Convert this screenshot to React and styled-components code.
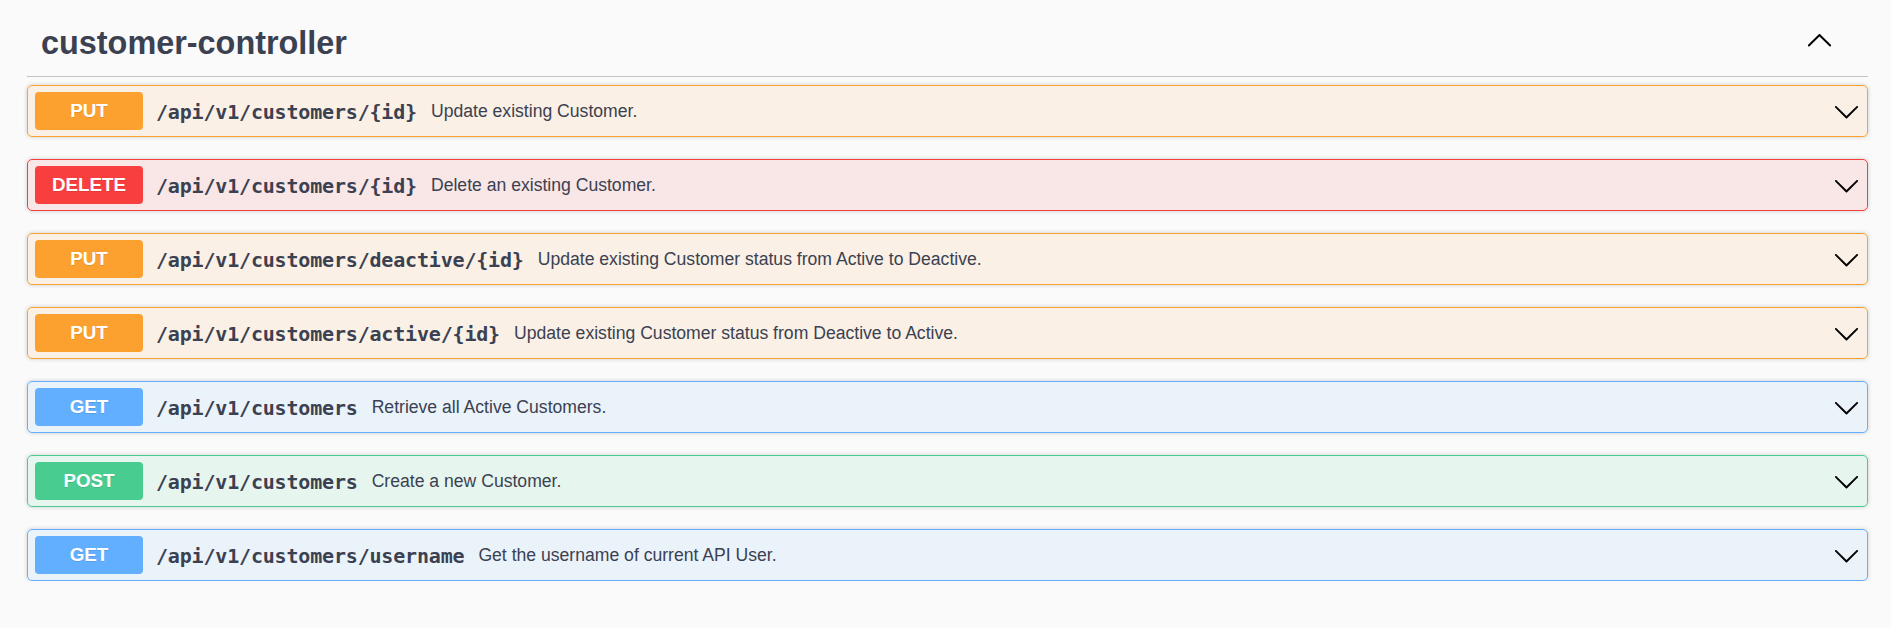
import React from "react";
import styled, { createGlobalStyle } from "styled-components";

const GlobalStyle = createGlobalStyle`
  html, body {
    margin: 0;
    padding: 0;
    background: #fafafa;
  }
  body {
    font-family: "Liberation Sans", Arial, sans-serif;
    color: #3b4151;
  }
`;

const METHOD_COLORS = {
  put: "#fca130",
  delete: "#f93e3e",
  get: "#61affe",
  post: "#49cc90",
};

const tint = (hex) => {
  const n = parseInt(hex.slice(1), 16);
  const r = (n >> 16) & 255;
  const g = (n >> 8) & 255;
  const b = n & 255;
  return `rgba(${r}, ${g}, ${b}, 0.1)`;
};

const Wrapper = styled.div`
  padding: 13px 23px 0 27px;
  width: 100%;
  box-sizing: border-box;
`;

const TagSection = styled.section`
  display: flex;
  flex-direction: column;
`;

const TagHeader = styled.h3`
  display: flex;
  align-items: center;
  box-sizing: border-box;
  height: 64px;
  margin: 0 0 8px;
  padding: 0 35px 2px 14px;
  border-bottom: 1px solid rgba(59, 65, 81, 0.3);
  font-family: "Liberation Sans", Arial, sans-serif;
  font-size: 32.4px;
  font-weight: 700;
  color: #3b4151;
`;

const TagName = styled.span`
  flex: 1 1 auto;
`;

const ToggleIcon = styled.svg`
  width: 27px;
  height: 27px;
  flex: none;
  margin-bottom: ${(p) => (p.up ? "8px" : "0")};
  fill: #000;
`;

const OpList = styled.div`
  display: flex;
  flex-direction: column;
  gap: 22px;
`;

const OpBlock = styled.div`
  border: 1px solid ${(p) => METHOD_COLORS[p.method]};
  background: ${(p) => tint(METHOD_COLORS[p.method])};
  border-radius: 5px;
  box-shadow: 0 0 4px rgba(0, 0, 0, 0.19);
`;

const Summary = styled.div`
  display: flex;
  align-items: center;
  padding: 6px 7px;
  cursor: pointer;
`;

const Method = styled.span`
  flex: none;
  width: 108px;
  height: 38px;
  display: flex;
  align-items: center;
  justify-content: center;
  border-radius: 4px;
  background: ${(p) => METHOD_COLORS[p.method]};
  color: #fff;
  font-family: "Liberation Sans", Arial, sans-serif;
  font-size: 18.8px;
  font-weight: 700;
  text-shadow: 0 1px 0 rgba(0, 0, 0, 0.1);
`;

const Path = styled.span`
  padding: 2px 14px 0 13px;
  font-family: "DejaVu Sans Mono", "Liberation Mono", monospace;
  font-size: 20px;
  letter-spacing: -0.18px;
  font-weight: 700;
  color: #3b4151;
  white-space: nowrap;
`;

const Description = styled.span`
  flex: 1 1 auto;
  font-family: "Liberation Sans", Arial, sans-serif;
  font-size: 17.6px;
  color: #3b4151;
`;

const ArrowDown = () => (
  <ToggleIcon viewBox="0 0 20 20">
    <path d="M17.418 6.109c.272-.268.709-.268.979 0s.271.701 0 .969l-7.908 7.83c-.27.268-.707.268-.979 0l-7.908-7.83c-.27-.268-.27-.701 0-.969.271-.268.709-.268.979 0L10 13.25l7.418-7.141z" />
  </ToggleIcon>
);

const ArrowUp = () => (
  <ToggleIcon up viewBox="0 0 20 20">
    <path d="M17.418 14.908c.272.268.709.268.979 0s.271-.701 0-.969l-7.908-7.83c-.27-.268-.707-.268-.979 0l-7.908 7.83c-.27.268-.27.701 0 .969.271.268.709.268.979 0L10 7.767l7.418 7.141z" />
  </ToggleIcon>
);

const operations = [
  { method: "put", path: "/api/v1/customers/{id}", summary: "Update existing Customer." },
  { method: "delete", path: "/api/v1/customers/{id}", summary: "Delete an existing Customer." },
  {
    method: "put",
    path: "/api/v1/customers/deactive/{id}",
    summary: "Update existing Customer status from Active to Deactive.",
  },
  {
    method: "put",
    path: "/api/v1/customers/active/{id}",
    summary: "Update existing Customer status from Deactive to Active.",
  },
  { method: "get", path: "/api/v1/customers", summary: "Retrieve all Active Customers." },
  { method: "post", path: "/api/v1/customers", summary: "Create a new Customer." },
  {
    method: "get",
    path: "/api/v1/customers/username",
    summary: "Get the username of current API User.",
  },
];

const App = () => {
  return (
    <>
      <GlobalStyle />
      <Wrapper>
        <TagSection>
          <TagHeader>
            <TagName>customer-controller</TagName>
            <ArrowUp />
          </TagHeader>
          <OpList>
            {operations.map((op, i) => (
              <OpBlock key={i} method={op.method}>
                <Summary>
                  <Method method={op.method}>{op.method.toUpperCase()}</Method>
                  <Path>{op.path}</Path>
                  <Description>{op.summary}</Description>
                  <ArrowDown />
                </Summary>
              </OpBlock>
            ))}
          </OpList>
        </TagSection>
      </Wrapper>
    </>
  );
};

export default App;
